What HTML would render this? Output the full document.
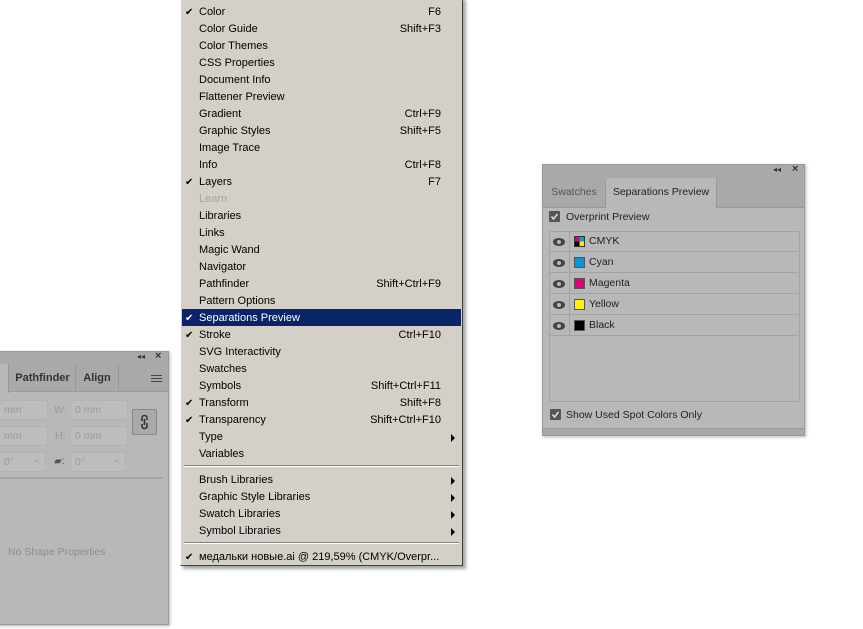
<!DOCTYPE html>
<html><head><meta charset="utf-8"><style>
*{margin:0;padding:0;box-sizing:border-box}
body{width:863px;height:629px;background:#fff;position:relative;overflow:hidden;font-family:"Liberation Sans","DejaVu Sans",sans-serif;font-size:11px}
.a{position:absolute}
#menu{left:180px;top:-3px;width:283px;height:569px;background:#d4d0c8;border-left:1px solid #fff;border-right:1px solid #404040;border-bottom:1px solid #404040;box-shadow:3px 3px 3px rgba(0,0,0,.35);color:#000;font-family:"Liberation Sans","DejaVu Sans",sans-serif;font-size:11px}
.it{position:absolute;left:1px;width:279px;height:17px;line-height:17px}
.it .t{position:absolute;left:17px}
.it .k{position:absolute;right:20px}
.it .c{position:absolute;left:3px;font-size:10px}
.it .r{position:absolute;right:6px;top:5px;width:0;height:0;border-top:4px solid transparent;border-bottom:4px solid transparent;border-left:4px solid #000}
.hl{background:#0a246a;color:#fff}
.dis{color:#a8a59c}
.sep{position:absolute;left:3px;width:275px;height:2px;border-top:1px solid #808080;border-bottom:1px solid #fff}
.pn{background:#b8b8b8;border:1px solid #999;box-shadow:1px 1px 3px rgba(0,0,0,.3);font-family:"Liberation Sans","DejaVu Sans",sans-serif;color:#222}
.fld{position:absolute;height:20px;background:#bdbdbd;border:1px solid #b3b3b3;color:#9a9a9a;font-size:10.5px;line-height:18px;padding-left:4px}
.cb{position:absolute;width:11px;height:11px;background:#555;border-radius:1px}
</style></head><body>

<!-- left panel -->
<div class="a pn" style="left:-2px;top:351px;width:171px;height:274px">
 <div class="a" style="left:0;top:0;width:169px;height:12px;background:#a9a9a9"></div>
 <div class="a" style="left:138px;top:0;font-size:8px;color:#333">◂◂</div>
 <div class="a" style="left:156px;top:-2px;font-size:11px;font-weight:bold;color:#333">×</div>
 <div class="a" style="left:0;top:12px;width:169px;height:28px;background:#a9a9a9;border-bottom:1px solid #999"></div>
 <div class="a" style="left:0;top:12px;width:10px;height:29px;background:#b8b8b8;border-right:1px solid #999"></div>
 <div class="a" style="left:11px;top:12px;width:66px;height:28px;border-right:1px solid #999;line-height:28px;text-align:center;font-weight:bold;font-size:11px;color:#333">Pathfinder</div>
 <div class="a" style="left:77px;top:12px;width:43px;height:28px;border-right:1px solid #999;line-height:28px;text-align:center;font-weight:bold;font-size:11px;color:#333">Align</div>
 <div class="a" style="left:152px;top:23px;width:11px;height:7px;border-top:1px solid #444;border-bottom:1px solid #444"><div style="margin-top:2px;height:1px;background:#444"></div></div>
 <div class="fld" style="left:0;top:48px;width:49px">mm</div>
 <div class="a" style="left:55px;top:52px;color:#9a9a9a;font-size:10.5px">W:</div>
 <div class="fld" style="left:71px;top:48px;width:58px">0 mm</div>
 <div class="fld" style="left:0;top:74px;width:49px">mm</div>
 <div class="a" style="left:56px;top:78px;color:#9a9a9a;font-size:10.5px">H:</div>
 <div class="fld" style="left:71px;top:74px;width:58px">0 mm</div>
 <div class="a" style="left:133px;top:57px;width:25px;height:26px;background:#a9a9a9;border:1px solid #888;border-radius:2px"></div>
 <svg class="a" style="left:140px;top:62px" width="11" height="16"><path d="M3 7 V4 a2.5 2.5 0 0 1 5 0 V6 M8 9 V12 a2.5 2.5 0 0 1 -5 0 V10 M5.5 5 V11" stroke="#333" stroke-width="1.6" fill="none"/></svg>
 <div class="fld" style="left:0;top:100px;width:47px">0°</div>
 <div class="a" style="left:34px;top:102px;color:#999;font-size:9px">⌄</div>
 <div class="a" style="left:55px;top:104px;color:#555;font-size:10px">▰:</div>
 <div class="fld" style="left:71px;top:100px;width:56px">0°</div>
 <div class="a" style="left:114px;top:102px;color:#999;font-size:9px">⌄</div>
 <div class="a" style="left:0;top:125px;width:164px;height:2px;background:#a5a5a5"></div>
 <div class="a" style="left:9px;top:194px;color:#8d8d8d;font-size:10.5px">No Shape Properties</div>
</div>

<!-- right panel -->
<div class="a pn" style="left:542px;top:164px;width:263px;height:272px">
 <div class="a" style="left:0;top:0;width:261px;height:13px;background:#a9a9a9"></div>
 <div class="a" style="left:230px;top:0;font-size:8px;color:#333">◂◂</div>
 <div class="a" style="left:249px;top:-2px;font-size:11px;font-weight:bold;color:#333">×</div>
 <div class="a" style="left:0;top:13px;width:261px;height:30px;background:#a9a9a9;border-bottom:1px solid #999"></div>
 <div class="a" style="left:0;top:13px;width:63px;height:30px;line-height:28px;text-align:center;font-size:10.5px;color:#555;border-right:1px solid #999">Swatches</div>
 <div class="a" style="left:63px;top:13px;width:111px;height:31px;background:#b8b8b8;border-right:1px solid #999;line-height:28px;text-align:center;font-size:10.5px;color:#222">Separations Preview</div>
 <div class="cb" style="left:6px;top:46px"></div>
 <svg class="a" style="left:6px;top:46px" width="11" height="11"><path d="M2.5 5.5 L4.5 8 L8.5 3" stroke="#ddd" stroke-width="1.6" fill="none"/></svg>
 <div class="a" style="left:23px;top:46px;font-size:10.5px">Overprint Preview</div>
 <div class="a" style="left:6px;top:66px;width:251px;height:171px;border:1px solid #a3a3a3;border-radius:2px"></div>
 <div class="cb" style="left:7px;top:244px"></div>
 <svg class="a" style="left:7px;top:244px" width="11" height="11"><path d="M2.5 5.5 L4.5 8 L8.5 3" stroke="#ddd" stroke-width="1.6" fill="none"/></svg>
 <div class="a" style="left:23px;top:244px;font-size:10.5px">Show Used Spot Colors Only</div>
 <div class="a" style="left:0;top:263px;width:261px;height:1px;background:#999"></div>
 <div class="a" style="left:0;top:264px;width:261px;height:6px;background:#a9a9a9"></div>
</div>
<!-- rows -->
<div class="a" style="left:549px;top:231px;width:249px;font-size:10.5px;color:#222">
 <div style="position:relative;height:21px;border-bottom:1px solid #a3a3a3"><div class="a" style="left:20px;top:0;width:1px;height:21px;background:#a3a3a3"></div><div class="a" style="left:25px;top:5px;width:11px;height:11px;background:conic-gradient(#00a0e0 0 25%,#ffec00 25% 50%,#000 50% 75%,#e0007a 75%);border:1px solid #333"></div><span class="a" style="left:40px;top:4px">CMYK</span></div>
 <div style="position:relative;height:21px;border-bottom:1px solid #a3a3a3"><div class="a" style="left:20px;top:0;width:1px;height:21px;background:#a3a3a3"></div><div class="a" style="left:25px;top:5px;width:11px;height:11px;background:#0a95d8;border:1px solid #555"></div><span class="a" style="left:40px;top:4px">Cyan</span></div>
 <div style="position:relative;height:21px;border-bottom:1px solid #a3a3a3"><div class="a" style="left:20px;top:0;width:1px;height:21px;background:#a3a3a3"></div><div class="a" style="left:25px;top:5px;width:11px;height:11px;background:#e0007a;border:1px solid #555"></div><span class="a" style="left:40px;top:4px">Magenta</span></div>
 <div style="position:relative;height:21px;border-bottom:1px solid #a3a3a3"><div class="a" style="left:20px;top:0;width:1px;height:21px;background:#a3a3a3"></div><div class="a" style="left:25px;top:5px;width:11px;height:11px;background:#fff200;border:1px solid #555"></div><span class="a" style="left:40px;top:4px">Yellow</span></div>
 <div style="position:relative;height:21px;border-bottom:1px solid #a3a3a3"><div class="a" style="left:20px;top:0;width:1px;height:21px;background:#a3a3a3"></div><div class="a" style="left:25px;top:5px;width:11px;height:11px;background:#000;border:1px solid #555"></div><span class="a" style="left:40px;top:4px">Black</span></div>
</div>
<svg class="a" style="left:552px;top:235px" width="14" height="100">
 <g fill="#444"><ellipse cx="7" cy="7" rx="6" ry="4"/><ellipse cx="7" cy="28" rx="6" ry="4"/><ellipse cx="7" cy="49" rx="6" ry="4"/><ellipse cx="7" cy="70" rx="6" ry="4"/><ellipse cx="7" cy="91" rx="6" ry="4"/></g>
 <g fill="#b8b8b8"><circle cx="7" cy="7" r="2"/><circle cx="7" cy="28" r="2"/><circle cx="7" cy="49" r="2"/><circle cx="7" cy="70" r="2"/><circle cx="7" cy="91" r="2"/></g>
</svg>

<!-- menu -->
<div id="menu" class="a">
 <div class="it" style="top:7px"><span class="c">✔</span><span class="t">Color</span><span class="k">F6</span></div>
 <div class="it" style="top:24px"><span class="t">Color Guide</span><span class="k">Shift+F3</span></div>
 <div class="it" style="top:41px"><span class="t">Color Themes</span></div>
 <div class="it" style="top:58px"><span class="t">CSS Properties</span></div>
 <div class="it" style="top:75px"><span class="t">Document Info</span></div>
 <div class="it" style="top:92px"><span class="t">Flattener Preview</span></div>
 <div class="it" style="top:109px"><span class="t">Gradient</span><span class="k">Ctrl+F9</span></div>
 <div class="it" style="top:126px"><span class="t">Graphic Styles</span><span class="k">Shift+F5</span></div>
 <div class="it" style="top:143px"><span class="t">Image Trace</span></div>
 <div class="it" style="top:160px"><span class="t">Info</span><span class="k">Ctrl+F8</span></div>
 <div class="it" style="top:177px"><span class="c">✔</span><span class="t">Layers</span><span class="k">F7</span></div>
 <div class="it dis" style="top:194px"><span class="t">Learn</span></div>
 <div class="it" style="top:211px"><span class="t">Libraries</span></div>
 <div class="it" style="top:228px"><span class="t">Links</span></div>
 <div class="it" style="top:245px"><span class="t">Magic Wand</span></div>
 <div class="it" style="top:262px"><span class="t">Navigator</span></div>
 <div class="it" style="top:279px"><span class="t">Pathfinder</span><span class="k">Shift+Ctrl+F9</span></div>
 <div class="it" style="top:296px"><span class="t">Pattern Options</span></div>
 <div class="it hl" style="top:312px;line-height:19px"><span class="c">✔</span><span class="t">Separations Preview</span></div>
 <div class="it" style="top:330px"><span class="c">✔</span><span class="t">Stroke</span><span class="k">Ctrl+F10</span></div>
 <div class="it" style="top:347px"><span class="t">SVG Interactivity</span></div>
 <div class="it" style="top:364px"><span class="t">Swatches</span></div>
 <div class="it" style="top:381px"><span class="t">Symbols</span><span class="k">Shift+Ctrl+F11</span></div>
 <div class="it" style="top:398px"><span class="c">✔</span><span class="t">Transform</span><span class="k">Shift+F8</span></div>
 <div class="it" style="top:415px"><span class="c">✔</span><span class="t">Transparency</span><span class="k">Shift+Ctrl+F10</span></div>
 <div class="it" style="top:432px"><span class="t">Type</span><span class="r"></span></div>
 <div class="it" style="top:449px"><span class="t">Variables</span></div>
 <div class="sep" style="top:468px"></div>
 <div class="it" style="top:475px"><span class="t">Brush Libraries</span><span class="r"></span></div>
 <div class="it" style="top:492px"><span class="t">Graphic Style Libraries</span><span class="r"></span></div>
 <div class="it" style="top:509px"><span class="t">Swatch Libraries</span><span class="r"></span></div>
 <div class="it" style="top:526px"><span class="t">Symbol Libraries</span><span class="r"></span></div>
 <div class="sep" style="top:545px"></div>
 <div class="it" style="top:552px"><span class="c">✔</span><span class="t">медальки новые.ai @ 219,59% (CMYK/Overpr...</span></div>
</div>
</body></html>
